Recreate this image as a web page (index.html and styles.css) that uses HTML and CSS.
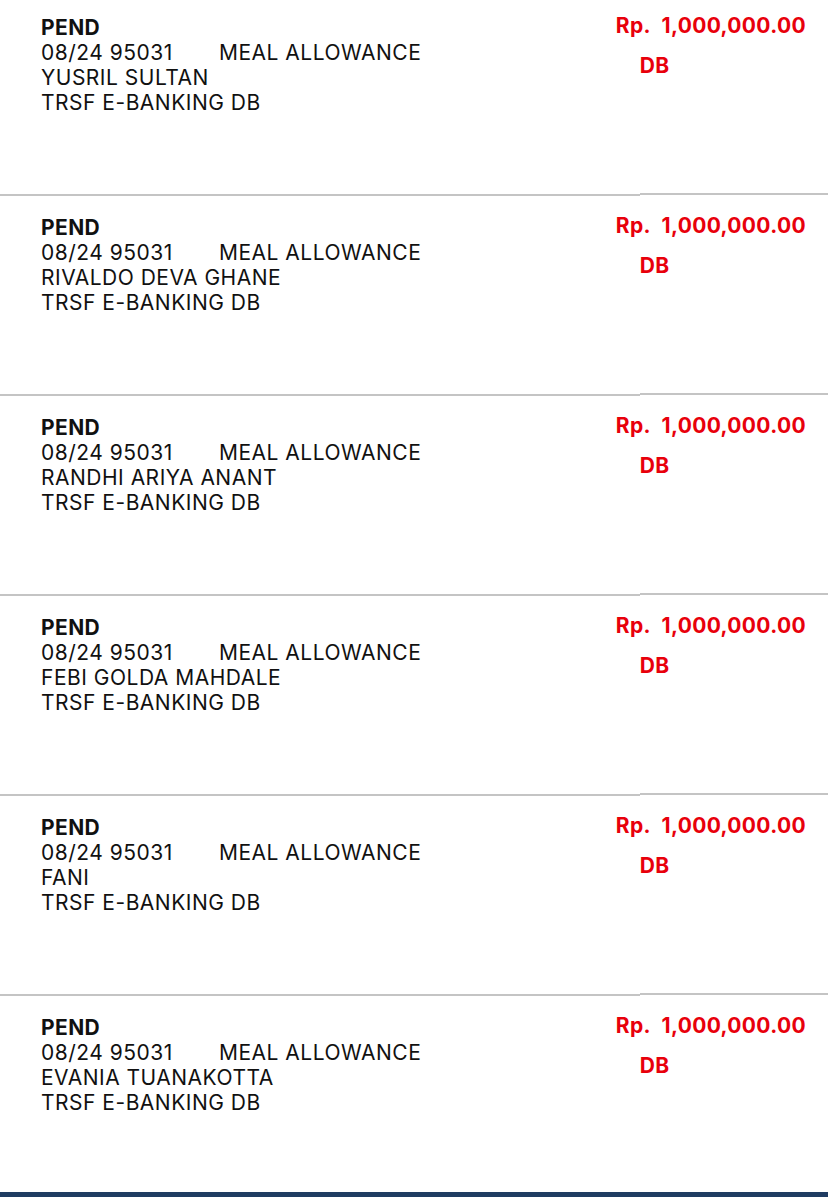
FILE: index.html
```html
<!DOCTYPE html>
<html>
<head>
<meta charset="utf-8">
<link rel="stylesheet" href="styles.css">
</head>
<body>
<main class="list">
  <section class="item">
    <div class="info">
      <div class="status">PEND</div>
      <div class="ref"><span class="code">08/24 95031</span><span class="desc">MEAL ALLOWANCE</span></div>
      <div class="line">YUSRIL SULTAN</div>
      <div class="line">TRSF E-BANKING DB</div>
    </div>
    <div class="amount">
      <div class="value">Rp.&nbsp; 1,000,000.00</div>
      <div class="type">DB</div>
    </div>
  </section>
  <div class="sep"><span class="sep-left"></span><span class="sep-right"></span></div>
  <section class="item">
    <div class="info">
      <div class="status">PEND</div>
      <div class="ref"><span class="code">08/24 95031</span><span class="desc">MEAL ALLOWANCE</span></div>
      <div class="line">RIVALDO DEVA GHANE</div>
      <div class="line">TRSF E-BANKING DB</div>
    </div>
    <div class="amount">
      <div class="value">Rp.&nbsp; 1,000,000.00</div>
      <div class="type">DB</div>
    </div>
  </section>
  <div class="sep"><span class="sep-left"></span><span class="sep-right"></span></div>
  <section class="item">
    <div class="info">
      <div class="status">PEND</div>
      <div class="ref"><span class="code">08/24 95031</span><span class="desc">MEAL ALLOWANCE</span></div>
      <div class="line">RANDHI ARIYA ANANT</div>
      <div class="line">TRSF E-BANKING DB</div>
    </div>
    <div class="amount">
      <div class="value">Rp.&nbsp; 1,000,000.00</div>
      <div class="type">DB</div>
    </div>
  </section>
  <div class="sep"><span class="sep-left"></span><span class="sep-right"></span></div>
  <section class="item">
    <div class="info">
      <div class="status">PEND</div>
      <div class="ref"><span class="code">08/24 95031</span><span class="desc">MEAL ALLOWANCE</span></div>
      <div class="line">FEBI GOLDA MAHDALE</div>
      <div class="line">TRSF E-BANKING DB</div>
    </div>
    <div class="amount">
      <div class="value">Rp.&nbsp; 1,000,000.00</div>
      <div class="type">DB</div>
    </div>
  </section>
  <div class="sep"><span class="sep-left"></span><span class="sep-right"></span></div>
  <section class="item">
    <div class="info">
      <div class="status">PEND</div>
      <div class="ref"><span class="code">08/24 95031</span><span class="desc">MEAL ALLOWANCE</span></div>
      <div class="line">FANI</div>
      <div class="line">TRSF E-BANKING DB</div>
    </div>
    <div class="amount">
      <div class="value">Rp.&nbsp; 1,000,000.00</div>
      <div class="type">DB</div>
    </div>
  </section>
  <div class="sep"><span class="sep-left"></span><span class="sep-right"></span></div>
  <section class="item last">
    <div class="info">
      <div class="status">PEND</div>
      <div class="ref"><span class="code">08/24 95031</span><span class="desc">MEAL ALLOWANCE</span></div>
      <div class="line">EVANIA TUANAKOTTA</div>
      <div class="line">TRSF E-BANKING DB</div>
    </div>
    <div class="amount">
      <div class="value">Rp.&nbsp; 1,000,000.00</div>
      <div class="type">DB</div>
    </div>
  </section>
</main>
<footer class="tabbar"></footer>
</body>
</html>
```

FILE: styles.css
```css
html, body {
  margin: 0;
  padding: 0;
  background: #ffffff;
}
body {
  font-family: Inter, "Liberation Sans", sans-serif;
  color: #111111;
  height: 1197px;
  overflow: hidden;
}
.list {
  display: flex;
  flex-direction: column;
}
.item {
  height: 193px;
  box-sizing: border-box;
  display: flex;
  justify-content: space-between;
  padding: 15px 22px 0 41px;
}
.item.last {
  height: 197px;
}
.info {
  font-size: 21px;
  line-height: 25px;
  letter-spacing: 0.5px;
}
.status {
  font-weight: 700;
  letter-spacing: 0.4px;
}
.ref {
  display: flex;
}
.code {
  width: 178px;
}
.amount {
  display: flex;
  flex-direction: column;
  align-items: flex-start;
  color: #e8000b;
  font-weight: 700;
  font-size: 21px;
  letter-spacing: 0.35px;
  margin-top: -2px;
}
.value {
  line-height: 25px;
  white-space: pre;
}
.type {
  margin-top: 15px;
  margin-left: 24px;
  line-height: 25px;
}
.sep {
  height: 7px;
  display: flex;
  align-items: flex-start;
}
.sep-left {
  width: 640px;
  height: 2px;
  margin-top: 1px;
  background: #c4c4c4;
}
.sep-right {
  flex: 1;
  height: 2px;
  background: #c4c4c4;
}
.tabbar {
  position: fixed;
  left: 0;
  right: 0;
  bottom: 0;
  height: 5px;
  background: #1f3c62;
}
```
